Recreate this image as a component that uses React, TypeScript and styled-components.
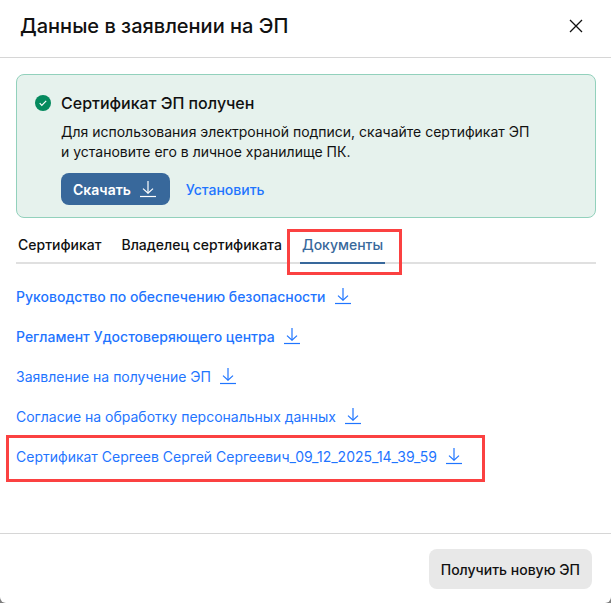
import React from "react";
import styled, { createGlobalStyle, css } from "styled-components";

const GlobalStyle = createGlobalStyle`
  * {
    box-sizing: border-box;
  }
  body {
    margin: 0;
    background: #7d7d7d;
    color: #111111;
    font-family: Inter, "Liberation Sans", sans-serif;
    font-size: 14px;
    line-height: 20px;
  }
  h1, h2, p, ul {
    margin: 0;
    padding: 0;
  }
  button {
    border: 0;
    padding: 0;
    background: none;
    color: inherit;
    font: inherit;
    cursor: pointer;
  }
`;

const Dialog = styled.section`
  display: flex;
  flex-direction: column;
  min-height: 100vh;
  background: #ffffff;
  border-radius: 0 0 6px 6px;
`;

const Header = styled.header`
  display: flex;
  align-items: center;
  justify-content: space-between;
  padding: 12px 24px 17px 20px;
  border-bottom: 1px solid #d6d6d6;
`;

const Title = styled.h1`
  font-size: 20px;
  line-height: 28px;
  font-weight: 500;
`;

const CloseButton = styled.button`
  display: flex;
  padding: 4px;
`;

const Content = styled.main`
  flex: 1;
  padding: 16px 15px 16px 16px;
`;

const Notice = styled.section`
  display: flex;
  align-items: flex-start;
  gap: 10px;
  padding: 18px 18px 12px;
  border: 1px solid #92d1bc;
  border-radius: 8px;
  background: #e6f2ed;
`;

const NoticeIcon = styled.span`
  display: flex;
  padding-top: 2px;
`;

const NoticeTitle = styled.h2`
  font-size: 16px;
  line-height: 20px;
  font-weight: 500;
`;

const NoticeText = styled.p`
  margin-top: 9px;
`;

const Actions = styled.div`
  display: flex;
  align-items: center;
  gap: 16px;
  margin-top: 11px;
`;

const PrimaryButton = styled.button`
  display: flex;
  align-items: center;
  gap: 9px;
  height: 32px;
  padding: 2px 14px 0 12px;
  border-radius: 8px;
  background: #38689b;
  color: #ffffff;
  font-weight: 600;
`;

const TextButton = styled.button`
  padding-top: 2px;
  color: #1f75ff;
  font-weight: 500;
`;

const Tabs = styled.div`
  display: flex;
  gap: 16px;
  margin-top: 16px;
  border-bottom: 2px solid #e0e0e0;
`;

const Tab = styled.button<{ $active?: boolean }>`
  position: relative;
  margin-bottom: -2px;
  padding: 1px 2px 7px;
  border-bottom: 2px solid transparent;
  font-weight: 500;
  ${({ $active }) =>
    $active &&
    css`
      color: #38689b;
      border-bottom-color: #38689b;
    `}
`;

const Highlight = styled.span<{ $inset: string }>`
  position: absolute;
  inset: ${({ $inset }) => $inset};
  border: 3px solid #fb4141;
  pointer-events: none;
`;

const DocumentList = styled.ul`
  display: flex;
  flex-direction: column;
  align-items: flex-start;
  gap: 20px;
  margin-top: 23px;
  list-style: none;
`;

const DocumentItem = styled.li`
  position: relative;
`;

const DocumentLink = styled.a<{ $strong?: boolean }>`
  display: flex;
  align-items: center;
  gap: 9px;
  color: #1f75ff;
  font-weight: ${({ $strong }) => ($strong ? 500 : 400)};
  text-decoration: none;
`;

const Footer = styled.footer`
  display: flex;
  justify-content: flex-end;
  padding: 15px 19px 14px;
  border-top: 1px solid #d6d6d6;
`;

const SecondaryButton = styled.button`
  height: 40px;
  padding: 2px 12px 0;
  border-radius: 8px;
  background: #e8e8e8;
  font-weight: 500;
`;

const DownloadIcon = () => (
  <svg width="16" height="18" viewBox="0 0 16 18" fill="none" stroke="currentColor" aria-hidden="true">
    <path d="M8 0v12.3" strokeWidth="1.2" />
    <path d="M3 7.6 8 12.3 13 7.6" strokeWidth="1.2" />
    <path d="M0 15.5h16" strokeWidth="1.2" />
  </svg>
);

const CloseIcon = () => (
  <svg width="14" height="14" viewBox="0 0 14 14" fill="none" stroke="#111111" strokeWidth="1.3" aria-hidden="true">
    <path d="M1 1l12 12M13 1 1 13" />
  </svg>
);

const SuccessIcon = () => (
  <svg width="16" height="16" viewBox="0 0 16 16" fill="none" aria-hidden="true">
    <circle cx="8" cy="8" r="8" fill="#058a5e" />
    <path d="M4.7 8.2 6.8 10.3 11.2 5.9" stroke="#ffffff" strokeWidth="1.2" />
  </svg>
);

const documents = [
  { name: "Руководство по обеспечению безопасности", strong: true },
  { name: "Регламент Удостоверяющего центра", strong: true },
  { name: "Заявление на получение ЭП" },
  { name: "Согласие на обработку персональных данных" },
  { name: "Сертификат Сергеев Сергей Сергеевич_09_12_2025_14_39_59", highlighted: true },
];

export default function App() {
  return (
    <>
      <GlobalStyle />
      <Dialog role="dialog" aria-labelledby="dialog-title">
        <Header>
          <Title id="dialog-title">Данные в заявлении на ЭП</Title>
          <CloseButton type="button" aria-label="Закрыть">
            <CloseIcon />
          </CloseButton>
        </Header>
        <Content>
          <Notice>
            <NoticeIcon>
              <SuccessIcon />
            </NoticeIcon>
            <div>
              <NoticeTitle>Сертификат ЭП получен</NoticeTitle>
              <NoticeText>
                Для использования электронной подписи, скачайте сертификат ЭП
                <br />и установите его в личное хранилище ПК.
              </NoticeText>
              <Actions>
                <PrimaryButton type="button">
                  Скачать
                  <DownloadIcon />
                </PrimaryButton>
                <TextButton type="button">Установить</TextButton>
              </Actions>
            </div>
          </Notice>
          <Tabs role="tablist">
            <Tab type="button" role="tab" aria-selected={false}>
              Сертификат
            </Tab>
            <Tab type="button" role="tab" aria-selected={false}>
              Владелец сертификата
            </Tab>
            <Tab type="button" role="tab" aria-selected $active>
              Документы
              <Highlight $inset="-5px -17px -13px -13px" />
            </Tab>
          </Tabs>
          <DocumentList>
            {documents.map((doc) => (
              <DocumentItem key={doc.name}>
                <DocumentLink href="#" $strong={doc.strong}>
                  {doc.name}
                  <DownloadIcon />
                </DocumentLink>
                {doc.highlighted && <Highlight $inset="-12px -23px -15px -10px" />}
              </DocumentItem>
            ))}
          </DocumentList>
        </Content>
        <Footer>
          <SecondaryButton type="button">Получить новую ЭП</SecondaryButton>
        </Footer>
      </Dialog>
    </>
  );
}
